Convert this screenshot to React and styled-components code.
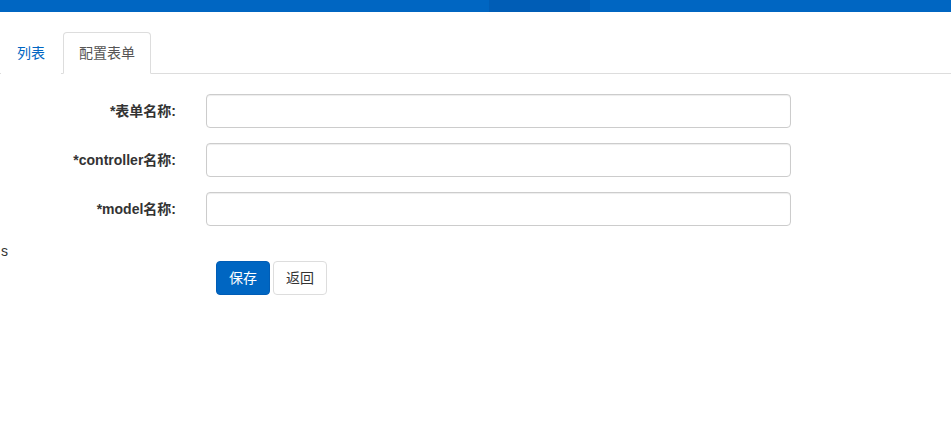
import React from "react";
import styled, { createGlobalStyle } from "styled-components";

const Global = createGlobalStyle`
  html, body { margin: 0; padding: 0; background: #fff; }
  body {
    font-family: "Liberation Sans", Arial, "Noto Sans CJK SC", sans-serif;
    font-size: 14px;
    line-height: 20px;
    color: #333;
  }
  * { box-sizing: border-box; }
`;

const TopBar = styled.div`
  height: 12px;
  background: #0066c2;
  display: flex;
`;

const TopSpacer = styled.div`
  width: ${(p) => p.$w}px;
`;

const TopActive = styled.div`
  width: 101px;
  background: #005db6;
`;

const Page = styled.div`
  padding-top: 20px;
`;

const Tabs = styled.ul`
  list-style: none;
  margin: 0;
  padding: 0 0 0 1px;
  display: flex;
  border-bottom: 1px solid #ddd;
`;

const Tab = styled.li`
  margin-right: 2px;
  margin-bottom: -1px;
  padding: 10px 15px;
  line-height: 20px;
  font-size: 14px;
  border: 1px solid ${(p) => (p.$active ? "#ddd" : "transparent")};
  border-bottom-color: ${(p) => (p.$active ? "#fff" : "transparent")};
  border-radius: 4px 4px 0 0;
  background: #fff;
  color: ${(p) => (p.$active ? "#555" : "#0066c2")};
  cursor: pointer;
`;

const Content = styled.div`
  padding-top: 20px;
`;

const FormRow = styled.div`
  display: flex;
  margin-bottom: 15px;
`;

const Label = styled.label`
  width: 191px;
  padding: 7px 15px 0 0;
  text-align: right;
  font-weight: bold;
  font-size: 14px;
  line-height: 20px;
  color: #333;
`;

const Field = styled.div`
  width: 615px;
  padding: 0 15px;
`;

const Input = styled.input`
  display: block;
  width: 100%;
  height: 34px;
  padding: 6px 12px;
  border: 1px solid #ccc;
  border-radius: 4px;
  font: inherit;
  box-shadow: inset 0 1px 1px rgba(0, 0, 0, 0.075);
  outline: none;
`;

const Stray = styled.div`
  padding-left: 1px;
  font-size: 14px;
  line-height: 20px;
  color: #333;
`;

const Actions = styled.div`
  display: flex;
  gap: 3px;
  padding-left: 216px;
`;

const Button = styled.button`
  height: 34px;
  padding: 6px 12px;
  font-family: inherit;
  font-size: 14px;
  line-height: 20px;
  border-radius: 4px;
  border: 1px solid ${(p) => (p.$primary ? "#005db6" : "#ddd")};
  background: ${(p) => (p.$primary ? "#0066c2" : "#fff")};
  color: ${(p) => (p.$primary ? "#fff" : "#333")};
  cursor: pointer;
`;

const fields = ["*表单名称:", "*controller名称:", "*model名称:"];

export default function App() {
  return (
    <>
      <Global />
      <TopBar>
        <TopSpacer $w={489} />
        <TopActive />
      </TopBar>
      <Page>
        <Tabs>
          <Tab>列表</Tab>
          <Tab $active>配置表单</Tab>
        </Tabs>
        <Content>
          {fields.map((f) => (
            <FormRow key={f}>
              <Label>{f}</Label>
              <Field>
                <Input type="text" />
              </Field>
            </FormRow>
          ))}
          <Stray>s</Stray>
          <Actions>
            <Button $primary>保存</Button>
            <Button>返回</Button>
          </Actions>
        </Content>
      </Page>
    </>
  );
}
